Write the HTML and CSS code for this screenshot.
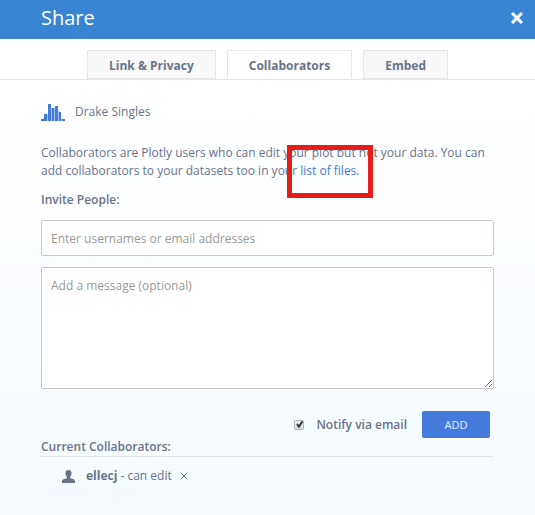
FILE: index.html
```html
<!DOCTYPE html>
<html lang="en">
<head>
<meta charset="utf-8">
<title>Share</title>
<link rel="stylesheet" href="styles.css">
</head>
<body>
<header class="header">
  <h1 class="title">Share</h1>
  <button class="close" type="button" aria-label="Close">
    <svg width="12" height="12" viewBox="0 0 12 12"><path d="M1 1 11 11M11 1 1 11" stroke="currentColor" stroke-width="3"/></svg>
  </button>
</header>
<nav class="tabs">
  <button class="tab" type="button">Link &amp; Privacy</button>
  <button class="tab tab-active" type="button">Collaborators</button>
  <button class="tab" type="button">Embed</button>
</nav>
<main class="content">
  <div class="plot">
    <svg class="plot-icon" width="24" height="18" viewBox="0 0 24 18" aria-hidden="true">
      <path fill="#a9c2ef" d="M2 15h1v3H2zM6 11h1v7H6zM10 5h1v13h-1zM13 5h1v13h-1zM17 8h1v10h-1zM20 15h1v3h-1z"/>
      <path fill="#447adb" d="M0 16h3v2H0zM3 11h3v7H3zM7 1h3v17H7zM11 5h2v13h-2zM14 3h3v15h-3zM18 9h2v9h-2zM21 16h3v2h-3z"/>
    </svg>
    <span>Drake Singles</span>
  </div>
  <p class="intro">Collaborators are Plotly users who can edit your plot but not your data. You can add collaborators to your datasets too in your <span class="marked"><a href="#files">list of files</a></span>.</p>
  <form class="form">
    <label class="label" for="people">Invite People:</label>
    <input class="field" id="people" type="text" placeholder="Enter usernames or email addresses">
    <textarea class="field message" aria-label="Message" placeholder="Add a message (optional)"></textarea>
    <div class="actions">
      <label class="notify"><input class="check" type="checkbox" checked><span>Notify via email</span></label>
      <button class="add" type="button">ADD</button>
    </div>
  </form>
  <h2 class="subtitle">Current Collaborators:</h2>
  <ul class="people">
    <li class="person">
      <svg class="person-icon" width="13" height="13" viewBox="0 0 13 13" aria-hidden="true"><path fill="currentColor" d="M6.500 0C8.600 0 9.600 1.200 9.500 3.300 9.500 5 9 6 8.200 6.800v1.400c2 .8 4.800 1 4.800 2.800v2H0v-2c0-1.800 2.800-2 4.800-2.800V6.800C4 6 3.500 5 3.500 3.300 3.400 1.200 4.400 0 6.500 0z"/></svg>
      <span><strong>ellecj</strong> - can edit</span>
      <button class="remove" type="button" aria-label="Remove ellecj">
        <svg width="8" height="8" viewBox="0 0 8 8"><path d="M.5.5l7 7M7.500.5l-7 7" stroke="currentColor"/></svg>
      </button>
    </li>
  </ul>
</main>
</body>
</html>
```
FILE: styles.css
```css
* {
  box-sizing: border-box;
}

body {
  display: flex;
  flex-direction: column;
  min-height: 100vh;
  margin: 0;
  background: #fff;
  color: #69738a;
  font: 12px/18px "Open Sans", sans-serif;
}

button {
  padding: 0;
  border: 0;
  background: none;
  color: inherit;
  font: inherit;
}

svg {
  display: block;
}

.header {
  display: flex;
  align-items: center;
  justify-content: space-between;
  padding: 0 12px 3px 41px;
  background: #3985d3;
  color: #fff;
}

.title {
  margin: 0;
  font-size: 20px;
  font-weight: 400;
  line-height: 36px;
}

.tabs {
  display: flex;
  justify-content: center;
  gap: 11px;
  padding-top: 11px;
  border-bottom: 1px solid #e5e6e7;
}

.tab {
  padding: 6px 21px 4px;
  border: 1px solid #e5e6e7;
  background: #f8f8f8;
  font-weight: 700;
  line-height: 17px;
}

.tab-active {
  border-bottom-color: #fff;
  background: #fff;
}

.content {
  flex: 1;
  padding: 23px 41px;
  background: linear-gradient(#fff, #f4faff);
}

.plot {
  display: flex;
  align-items: center;
  gap: 10px;
}

.intro {
  margin: 23px 0 11px;
}

.intro a {
  color: #447adb;
  text-decoration: none;
}

.marked {
  position: relative;
}

.marked::after {
  content: "";
  position: absolute;
  inset: -17px -17px -19px -13px;
  border: 5px solid #e81c17;
  pointer-events: none;
}

.form {
  display: flex;
  flex-direction: column;
}

.label {
  font-weight: 600;
}

.field {
  width: 100%;
  margin: 11px 0 0;
  padding: 9px 9px 7px;
  border: 1px solid #c8cacc;
  border-radius: 2px;
  background: #fff;
  color: inherit;
  font: 12px/18px "Open Sans", sans-serif;
}

.field::placeholder {
  color: #999;
  opacity: 1;
}

.message {
  height: 122px;
  resize: vertical;
}

.actions {
  display: flex;
  align-items: center;
  justify-content: flex-end;
  gap: 15px;
  padding: 22px 4px 0 0;
}

.notify {
  display: flex;
  align-items: center;
  gap: 12px;
  font-weight: 600;
}

.check {
  appearance: none;
  width: 10px;
  height: 10px;
  margin: 0;
  border: 1px solid #b0b2b5;
  border-radius: 2px;
  background: linear-gradient(#f2f2f2, #dcdcdc);
}

.check:checked::before {
  content: "";
  display: block;
  width: 8px;
  height: 8px;
  background: #333;
  clip-path: polygon(10% 50%, 28% 36%, 42% 56%, 74% 5%, 98% 16%, 50% 92%, 36% 92%);
}

.add {
  width: 68px;
  border-radius: 2px;
  background: #447adb;
  color: #e3ecfb;
  font-size: 11px;
  line-height: 27px;
}

.subtitle {
  margin: 0;
  padding-bottom: 1px;
  border-bottom: 1px solid #e2e5e8;
  font-size: 12px;
  font-weight: 600;
  line-height: 17px;
}

.people {
  margin: 0;
  padding: 10px 21px;
  list-style: none;
}

.person {
  display: flex;
  align-items: center;
}

.person-icon {
  margin-right: 11px;
}

.remove {
  margin-left: 8px;
}
```
